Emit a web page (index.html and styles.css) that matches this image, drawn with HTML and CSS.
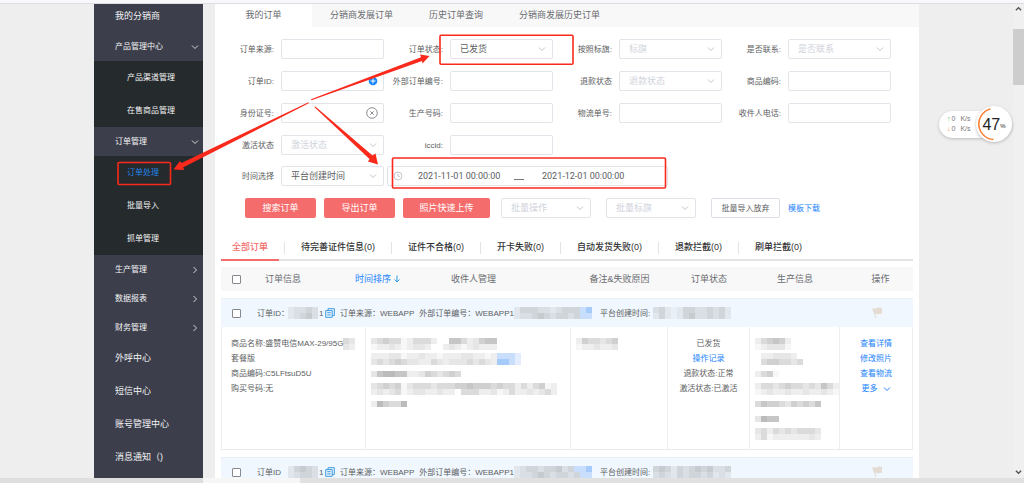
FILE: index.html
```html
<!DOCTYPE html>
<html lang="zh-CN">
<head>
<meta charset="utf-8">
<title>订单处理</title>
<link rel="stylesheet" href="styles.css">
</head>
<body>
<div class="topbar"></div>
<div class="shell">
  <nav class="sidebar">
    <a class="item first" href="#">我的分销商</a>
    <a class="item head" href="#">产品管理中心<svg class="caret" viewBox="0 0 8 8"><path d="M1 2.5 4 5.5 7 2.5"/></svg></a>
    <div class="sub">
      <a class="item" href="#">产品渠道管理</a>
      <a class="item" href="#">在售商品管理</a>
    </div>
    <a class="item head" href="#">订单管理<svg class="caret" viewBox="0 0 8 8"><path d="M1 2.5 4 5.5 7 2.5"/></svg></a>
    <div class="sub">
      <a class="item active" href="#">订单处理</a>
      <a class="item" href="#">批量导入</a>
      <a class="item" href="#">抓单管理</a>
    </div>
    <a class="item head" href="#">生产管理<svg class="caret" viewBox="0 0 8 8"><path d="M2.5 1 5.5 4 2.5 7"/></svg></a>
    <a class="item head" href="#">数据报表<svg class="caret" viewBox="0 0 8 8"><path d="M2.5 1 5.5 4 2.5 7"/></svg></a>
    <a class="item head" href="#">财务管理<svg class="caret" viewBox="0 0 8 8"><path d="M2.5 1 5.5 4 2.5 7"/></svg></a>
    <a class="item" href="#">外呼中心</a>
    <a class="item" href="#">短信中心</a>
    <a class="item" href="#">账号管理中心</a>
    <a class="item" href="#">消息通知（)</a>
  </nav>

  <main class="main">
    <div class="tabs">
      <button class="tab current">我的订单</button>
      <button class="tab">分销商发展订单</button>
      <button class="tab">历史订单查询</button>
      <button class="tab">分销商发展历史订单</button>
    </div>

    <form class="filters">
      <div class="field"><label for="f1">订单来源:</label><input id="f1"></div>
      <div class="field"><label for="f2">订单状态:</label><select id="f2"><option>已发货</option></select></div>
      <div class="field"><label for="f3">按照标旗:</label><select id="f3" class="empty"><option>标旗</option></select></div>
      <div class="field"><label for="f4">是否联系:</label><select id="f4" class="empty"><option>是否联系</option></select></div>

      <div class="field"><label for="f5">订单ID:</label><input id="f5">
        <svg class="badge" viewBox="0 0 12 12"><circle cx="7" cy="6" r="4.3" fill="#1684fc"/><path d="M4.5 6h5M7 3.5v5" stroke="#fff"/></svg></div>
      <div class="field"><label for="f6">外部订单编号:</label><input id="f6"></div>
      <div class="field"><label for="f7">退款状态</label><select id="f7" class="empty"><option>退款状态</option></select></div>
      <div class="field"><label for="f8">商品编码:</label><input id="f8"></div>

      <div class="field"><label for="f9">身份证号:</label><input id="f9">
        <svg class="badge" viewBox="0 0 12 12" fill="none" stroke="#8a8d92"><circle cx="6" cy="6" r="5.3"/><path d="M4.3 4.3 7.7 7.7M7.7 4.3 4.3 7.7"/></svg></div>
      <div class="field"><label for="f10">生产号码:</label><input id="f10"></div>
      <div class="field"><label for="f11">物流单号:</label><input id="f11"></div>
      <div class="field"><label for="f12">收件人电话:</label><input id="f12"></div>

      <div class="field"><label for="f13">激活状态</label><select id="f13" class="empty"><option>激活状态</option></select></div>
      <div class="field"><label for="f14">iccid:</label><input id="f14"></div>
    </form>

    <div class="period">
      <div class="field"><label for="f15">时间选择</label><select id="f15"><option>平台创建时间</option></select></div>
      <div class="range">
        <svg class="clock" viewBox="0 0 10 10" fill="none" stroke="#c4c7ce"><circle cx="5" cy="5" r="4"/><path d="M5 2.5V5.3H7"/></svg>
        <input aria-label="开始时间" value="2021-11-01 00:00:00">
        <span class="dash"></span>
        <input aria-label="结束时间" value="2021-12-01 00:00:00">
      </div>
    </div>

    <div class="actions">
      <button class="btn primary">搜索订单</button>
      <button class="btn primary">导出订单</button>
      <button class="btn primary wide">照片快速上传</button>
      <select class="empty" aria-label="批量操作"><option>批量操作</option></select>
      <select class="empty" aria-label="批量标旗"><option>批量标旗</option></select>
      <button class="btn plain">批量导入放弃</button>
      <a class="link" href="#">模板下载</a>
    </div>

    <div class="content">
      <div class="status">
        <button class="state on">全部订单</button>
        <button class="state">待完善证件信息(0)</button>
        <button class="state">证件不合格(0)</button>
        <button class="state">开卡失败(0)</button>
        <button class="state">自动发货失败(0)</button>
        <button class="state">退款拦截(0)</button>
        <button class="state">刷单拦截(0)</button>
      </div>

      <table class="orders">
        <colgroup><col class="c1"><col class="c2"><col class="c3"><col class="c4"><col class="c5"><col class="c6"></colgroup>
        <thead>
          <tr>
            <th colspan="2"><div class="lead">
              <input type="checkbox" aria-label="全选">
              <span class="h-info">订单信息</span>
              <a class="h-sort link" href="#">时间排序<svg viewBox="0 0 8 8"><path d="M4 .5v6.500M1.500 4.500 4 7 6.500 4.500"/></svg></a>
              <span>收件人管理</span>
            </div></th>
            <th>备注&amp;失败原因</th><th>订单状态</th><th>生产信息</th><th class="op">操作</th>
          </tr>
        </thead>
        <tbody>
          <tr class="bar">
            <td colspan="5"><div class="summary">
              <input type="checkbox" aria-label="选择订单">
              <span class="s-id">订单ID：</span><i class="mosaic" data-tiles="bccdc/bcdec"></i><span class="s-end">1</span>
              <svg class="copy" viewBox="0 0 10 10"><path d="M3 2.500V.7H9.300V7.500H7.300M.7 2.600H7.200V9.300H.7ZM2.200 4.700H5.700M2.200 6.900H5.700"/></svg>
              <span class="s-src">订单来源：WEBAPP</span><span>外部订单编号：WEBAPP1</span><i class="mosaic" data-tiles="bdddccbcdddxy/bccdedcddcdxx"></i>
              <span class="s-time">平台创建时间:</span><i class="mosaic" data-tiles="cdbabddccdcdb/bdbabdeccdcdb"></i>
            </div></td>
            <td class="op"><svg class="flag" viewBox="0 0 12 12"><path d="M1 1q2 1 5 0t5 0V6.500Q8 8 4 6.500L5.500 11H4.500Z"/></svg></td>
          </tr>
          <tr class="detail">
            <td class="goods">商品名称:盛赞电信MAX-29/95G<i class="mosaic" data-tiles="dc/cb"></i><br>套餐版<br>商品编码:C5LFtsuD5U<br>购买号码:无</td>
            <td class="blur">
              <p><i class="mosaic" data-tiles="cdeddabdddb..ffdbceff/abbcbabccb..bcbabcbbb"></i></p>
              <p><i class="mosaic" data-tiles="bbbccabbcbbabbbccbbabxxxw/cdcdedccbbdcbcccdcdcbyyxw"></i></p>
              <p><i class="mosaic" data-tiles="cfggffbbcedcded"></i></p>
              <p><i class="mosaic" data-tiles="cdedeacdddcdddeefeeededdbdbdeab/bcbcdabccbbcbb.dddbbcabdbbcbcdb"></i></p>
              <p><i class="mosaic" data-tiles="bgeddg"></i></p>
            </td>
            <td class="blur"><p><i class="mosaic" data-tiles="beddcde/abbcbbc"></i></p></td>
            <td class="mid">已发货<br><a class="link" href="#">操作记录</a><br>退款状态:正常<br>激活状态:已激活</td>
            <td class="blur">
              <p><i class="mosaic" data-tiles="bdefeb/abccca"></i></p>
              <p><i class="mosaic" data-tiles=".bbcccb./.deeddcd"></i></p>
              <p><i class="mosaic" data-tiles="bdea"></i></p>
              <p><i class="mosaic" data-tiles="bddcdeddcdcfdb/abcbbcbbcbbcba"></i></p>
              <p><i class="mosaic" data-tiles="dfeedcededf"></i></p>
              <p><i class="mosaic" data-tiles="cgff"></i></p>
              <p><i class="mosaic" data-tiles="cdbdcdcdddc/bdabbbbbbcb"></i></p>
            </td>
            <td class="mid"><a class="link" href="#">查看详情</a><br><a class="link" href="#">修改照片</a><br><a class="link" href="#">查看物流</a><br><a class="link more" href="#">更多<svg viewBox="0 0 8 8"><path d="M1 2.500 4 5.500 7 2.500"/></svg></a></td>
          </tr>
        </tbody>
        <tbody>
          <tr class="bar">
            <td colspan="5"><div class="summary">
              <input type="checkbox" aria-label="选择订单">
              <span class="s-id">订单ID</span><i class="mosaic" data-tiles="bdedc/bcddc"></i><span class="s-end">1</span>
              <svg class="copy" viewBox="0 0 10 10"><path d="M3 2.500V.7H9.300V7.500H7.300M.7 2.600H7.200V9.300H.7ZM2.200 4.700H5.700M2.200 6.900H5.700"/></svg>
              <span class="s-src">订单来源：WEBAPP</span><span>外部订单编号：WEBAPP1</span><i class="mosaic" data-tiles="bcddcddecdxxy/bccdedcddcdxx"></i>
              <span class="s-time">平台创建时间:</span><i class="mosaic" data-tiles="dedbdcdedeccd/cdcbdcddcdbcb"></i>
            </div></td>
            <td class="op"><svg class="flag" viewBox="0 0 12 12"><path d="M1 1q2 1 5 0t5 0V6.500Q8 8 4 6.500L5.500 11H4.500Z"/></svg></td>
          </tr>
        </tbody>
      </table>
    </div>
  </main>
</div>

<div class="scrollbar">
  <svg viewBox="0 0 8 8"><path d="M1 5.500 4 2.500 7 5.500"/></svg>
  <div class="thumb"></div>
  <svg class="down" viewBox="0 0 8 8"><path d="M1 2.500 4 5.500 7 2.500"/></svg>
</div>
<div class="bottombar"><span class="dim"></span><span class="light"></span></div>

<div class="meter">
  <div class="rates">
    <span><b class="up">↑</b>0<em>K/s</em></span>
    <span><b class="dn">↓</b>0<em>K/s</em></span>
  </div>
  <div class="dial">
    <svg viewBox="0 0 36 36"><path d="M14.500 3A15.500 15.500 0 0 0 17.500 33.500" fill="none" stroke="#fa8136" stroke-width="1.600"/></svg>
    <strong>47</strong><small>%</small>
  </div>
</div>

<svg class="marks" width="1024" height="483" viewBox="0 0 1024 483">
  <g fill="none" stroke="#f92a1c" stroke-width="1.600">
    <rect x="118" y="162.500" width="52.500" height="22" rx="1"/>
    <rect x="440" y="35.300" width="133" height="29" rx="1"/>
    <rect x="392.500" y="158" width="273" height="30" rx="1"/>
  </g>
  <g fill="#f92a1c">
    <path d="M311 99.300 421 57.300 420 54.500 429.500 56 422.500 63.500 422 61 311.500 100.200Z"/>
    <path d="M308.500 102.200 181.500 163 180 161 173.500 169.500 184.500 170 183 167.500 308.700 103.200Z"/>
    <path d="M315 106.300 372.500 155.500 375.500 153.500 378 164.500 368 161.500 369.500 159 314.500 107.200Z"/>
  </g>
</svg>
<script src="mosaic.js"></script>
</body>
</html>
```
FILE: styles.css
```css
* { box-sizing: border-box; }
body {
  margin: 0;
  height: 100vh;
  overflow: hidden;
  position: relative;
  background: #eee;
  color: #5c5e62;
  font: 9px/15px "Liberation Sans", "Noto Sans CJK SC", sans-serif;
}
a { color: inherit; text-decoration: none; }
button, input, select { font: inherit; color: inherit; margin: 0; }
button { border: 0; background: none; padding: 0; white-space: nowrap; }
.link { color: #2484fc; }

.topbar {
  position: absolute; top: 0; left: 0; right: 0; z-index: 3;
  height: 4px; background: #f8f8fb; border-bottom: 1px solid #dcdce2;
}
.shell { display: flex; gap: 12px; height: 100vh; padding: 0 105px 0 94px; }

.sidebar { flex: 0 0 109px; background: #3c3f4b; color: #f2f2f4; }
.item { display: flex; align-items: center; height: 33px; padding-left: 21px; }
.first { height: 32px; }
.head { height: 29px; font-size: 8px; justify-content: space-between; padding-right: 4px; }
.caret { width: 8px; height: 8px; fill: none; stroke: #d4d5d9; }
.sub { background: #252a2c; font-size: 8px; }
.sub .item { padding-left: 33px; }
.sub .active { color: #2484e8; }

.main { flex: 1; min-width: 0; background: #fff; }
.tabs { display: flex; padding-top: 3px; background: #f8f8f8; height: 27px; }
.tab { padding: 0 18px; color: #6a6c70; }
.tab.current { background: #fff; flex: 0 0 97px; }

.filters { display: grid; grid-template-columns: repeat(4, minmax(0, 1fr)); gap: 12px 0; padding: 12px 28px 0 0; }
.field { display: flex; align-items: center; position: relative; min-width: 0; }
.field label { flex: 0 0 66px; padding-right: 7px; text-align: right; font-size: 8px; white-space: nowrap; }
.field input, select {
  flex: 1; min-width: 0; height: 20px; padding: 0 9px;
  border: 1px solid #e2e4ea; border-radius: 2px; background: #fff;
}
select {
  appearance: none;
  background: #fff url("data:image/svg+xml,%3Csvg xmlns='http://www.w3.org/2000/svg' viewBox='0 0 8 8'%3E%3Cpath d='M1 2.500 4 5.500 7 2.500' fill='none' stroke='%23c0c4cc'/%3E%3C/svg%3E") no-repeat right 6px center / 8px 8px;
}
select.empty { color: #d0d3da; }
.badge { position: absolute; right: 6px; top: 4px; width: 12px; height: 12px; }

.period { display: flex; gap: 3px; margin-top: 11px; }
.period .field { flex: 0 0 169px; }
.range {
  display: flex; align-items: center; height: 20px; padding: 0 8px 0 5px;
  border: 1px solid #e2e4ea; border-radius: 2px; font-family: Roboto, "Noto Sans CJK SC", sans-serif;
}
.clock { width: 10px; height: 10px; margin-right: 15px; }
.range input { width: 88px; border: 0; padding: 0; background: none; }
.dash { width: 10px; height: 1px; margin: 6px 18px 0 8px; background: #777; }
.range input:last-child { width: 117px; }

.actions { display: flex; align-items: center; gap: 8px; padding: 12px 30px 0; }
.btn { height: 20px; border-radius: 2px; }
.primary { flex: 0 0 71px; background: #f56c6c; color: #fff; }
.primary.wide { flex-basis: 87px; }
.actions select { flex: 0 0 90px; margin: 0 7px 0 0; }
.actions .wide { margin-right: 3px; }
.plain { flex: 0 0 69px; border: 1px solid #dcdfe6; font-size: 8px; }
.actions .link { font-size: 8px; }

.content { padding: 17px 6px 0; }
.status { display: flex; height: 26px; border-bottom: 2px solid #e2e3e4; }
.state { position: relative; padding: 0 16px 0 17px; color: #303133; font-weight: 500; }
.state + .state::before {
  content: ""; position: absolute; left: 0; top: 7px; height: 12px; width: 1px; background: #e2e3e6;
}
.state.on {
  height: 26px; flex: 0 0 58px; margin-right: 5px; padding: 0;
  color: #f56c6c; border-bottom: 2px solid #f56c6c;
}

.orders { width: 100%; margin-top: 6px; table-layout: fixed; border-spacing: 0; }
.c1 { width: 145px; }
.c3 { width: 97px; }
.c4 { width: 82px; }
.c5 { width: 90px; }
.c6 { width: 73px; }
th { height: 24px; padding: 0; background: #f8f8f8; font-weight: 400; color: #6a6c70; }
.lead, .summary { display: flex; align-items: center; white-space: nowrap; }
input[type="checkbox"] {
  appearance: none; flex: none; width: 9px; height: 9px; margin: 0 0 0 11px;
  border: 1px solid #85888f; border-radius: 1px; background: #fff;
}
.h-info { margin-left: 24px; width: 90px; text-align: left; }
.h-sort { width: 96px; text-align: left; }
.h-sort svg { width: 8px; height: 8px; margin-left: 2px; vertical-align: -1px; fill: none; stroke: #2f9be8; }
tbody::before { content: ""; display: block; height: 7px; }
.bar td { height: 29px; padding: 0; background: #f0f7fe; border-top: 1px solid #e9f0f6; font-size: 8px; }
.s-id { margin-left: 16px; width: 31px; }
.s-end { margin-left: 1px; width: 6px; }
.copy { width: 10px; height: 10px; fill: none; stroke: #3b9be6; }
.s-src { margin: 0 5px; }
.s-time { margin: 0 3px 0 8px; }
.op, .mid { text-align: center; }
th.op { padding-left: 8px; }
.flag { width: 12px; height: 12px; fill: #e4dbd2; vertical-align: middle; }

.detail td {
  height: 123px; padding: 9px 0 0; vertical-align: top; font-size: 8px;
  border-right: 1px solid #eceef1; border-bottom: 1px solid #e8eaed;
}
.detail .goods { padding-left: 9px; border-left: 1px solid #eceef1; white-space: nowrap; }
.detail .blur { padding-left: 5px; }
.blur p { display: flex; align-items: center; height: 15px; margin: 0; }
.mosaic { display: inline-block; vertical-align: middle; flex: none; line-height: 0; }
.more svg { width: 8px; height: 8px; margin-left: 5px; vertical-align: -2px; fill: none; stroke: #2484fc; }

.scrollbar {
  position: absolute; right: 0; top: 4px; bottom: 5px; width: 11px;
  display: flex; flex-direction: column; align-items: center; background: #f0f0f0;
}
.scrollbar svg { width: 7px; height: 8px; margin-top: 1px; fill: none; stroke: #555; stroke-width: 1.5; }
.thumb { width: 100%; height: 56px; margin-top: 16px; background: #cdcdcd; }
.scrollbar .down { margin: auto 0 2px; }
.bottombar { position: absolute; left: 0; right: 0; bottom: 0; height: 5px; display: flex; background: #e1e1e1; }
.dim { width: 203px; background: #dedede; }
.light { width: 97px; background: #f6f6f6; }

.meter { position: absolute; right: 12px; top: 106px; display: flex; align-items: center; }
.rates {
  display: flex; flex-direction: column; justify-content: center; height: 27px; width: 73px;
  margin-right: -36px; padding-left: 8px; border-radius: 14px; background: #fff;
  box-shadow: 0 1px 3px #bbb; font-size: 7px; line-height: 10px; color: #777;
}
.rates em { font-style: normal; margin-left: 5px; }
.up { color: #3cb95c; margin-right: 1px; }
.dn { color: #fa8136; margin-right: 1px; }
.dial {
  position: relative; display: flex; align-items: center; justify-content: center;
  width: 36px; height: 36px; border-radius: 50%; background: #fff; box-shadow: 0 1px 3px #bbb; color: #222;
}
.dial svg { position: absolute; inset: 0; }
.dial strong { font-size: 16px; font-weight: 400; }
.dial small { font-size: 6px; margin-top: 5px; }
.marks { position: absolute; left: 0; top: 0; pointer-events: none; z-index: 4; }
```
FILE: mosaic.js
```js
// Masks private values with a grid of shaded tiles; rows are split by "/".
const shades = {
  a: '#78788010', b: '#78787820', c: '#78787830', d: '#78787844', e: '#78787858',
  f: '#7878786c', g: '#78787880', w: '#e3edfd', x: '#c9defc', y: '#a5cbfa'
};
const tile = 6;
document.querySelectorAll('.mosaic').forEach(function (box) {
  const rows = box.dataset.tiles.split('/');
  const width = rows[0].length * tile;
  const height = rows.length * tile;
  let out = '<svg width="' + width + '" height="' + height + '" shape-rendering="crispEdges">';
  rows.forEach(function (row, y) {
    row.split('').forEach(function (key, x) {
      if (shades[key]) {
        out += '<rect x="' + x * tile + '" y="' + y * tile + '" width="' + tile + '" height="' + tile + '" fill="' + shades[key] + '"/>';
      }
    });
  });
  box.innerHTML = out + '</svg>';
});
```
